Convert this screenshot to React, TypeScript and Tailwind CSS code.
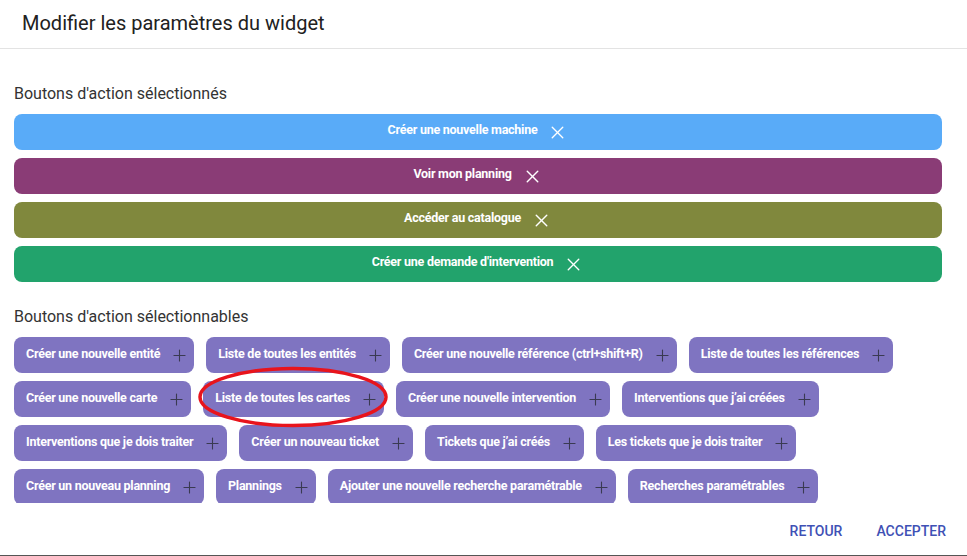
import React from 'react';
import { X, Plus } from 'lucide-react';

const SELECTED = [
  { label: 'Créer une nouvelle machine', color: 'bg-[#59abf8]' },
  { label: 'Voir mon planning', color: 'bg-[#8a3c76]' },
  { label: 'Accéder au catalogue', color: 'bg-[#80883d]' },
  { label: "Créer une demande d'intervention", color: 'bg-[#22a36c]' },
];

const AVAILABLE = [
  'Créer une nouvelle entité',
  'Liste de toutes les entités',
  'Créer une nouvelle référence (ctrl+shift+R)',
  'Liste de toutes les références',
  'Créer une nouvelle carte',
  'Liste de toutes les cartes',
  'Créer une nouvelle intervention',
  'Interventions que j’ai créées',
  'Interventions que je dois traiter',
  'Créer un nouveau ticket',
  'Tickets que j’ai créés',
  'Les tickets que je dois traiter',
  'Créer un nouveau planning',
  'Plannings',
  'Ajouter une nouvelle recherche paramétrable',
  'Recherches paramétrables',
];

const App: React.FC = () => {
  return (
    <div className="relative w-[967px] h-[556px] bg-white flex flex-col border-b border-[#555] font-['Roboto',sans-serif] overflow-hidden">
      {/* Header */}
      <div className="h-[49px] shrink-0 border-b border-[#e3e3e3] flex items-center px-[22px]">
        <h1 className="text-[20px] text-[#212121] leading-none -mt-[2px]">Modifier les paramètres du widget</h1>
      </div>

      {/* Content */}
      <div className="h-[454px] shrink-0 overflow-hidden px-[14px] pt-[35px]">
        <p className="text-[16px] text-[#333] leading-5 mb-[10px]">Boutons d'action sélectionnés</p>
        <div className="flex flex-col gap-2 w-[928px]">
          {SELECTED.map((s) => (
            <div key={s.label} className={`${s.color} h-9 rounded-lg flex items-center justify-center gap-[10px] text-white`}>
              <span className="text-[12.5px] font-bold tracking-[-0.25px] -mt-[3px]">{s.label}</span>
              <X size={21} strokeWidth={1.6} />
            </div>
          ))}
        </div>

        <p className="text-[16px] text-[#333] leading-5 mt-[25px] mb-[10px]">Boutons d'action sélectionnables</p>
        <div className="flex flex-wrap gap-x-3 gap-y-2 w-[900px]">
          {AVAILABLE.map((a) => (
            <div key={a} className="h-9 rounded-lg bg-[#7f74c1] flex items-center pl-3 pr-[5px] gap-[10px]">
              <span className="text-[12.5px] font-bold text-white tracking-[-0.25px] -mt-[2px]">{a}</span>
              <Plus size={19} strokeWidth={1.4} className="text-[#3a3a52]" />
            </div>
          ))}
        </div>
      </div>

      {/* Footer */}
      <div className="flex-1 flex items-center justify-end gap-[34px] pr-[21px] pt-[5px]">
        <button className="text-[14px] font-medium text-[#3f51b5]">RETOUR</button>
        <button className="text-[14px] font-medium text-[#3f51b5]">ACCEPTER</button>
      </div>

      {/* Annotation */}
      <svg className="absolute left-[196px] top-[366px] pointer-events-none" width="194" height="64" viewBox="0 0 194 64">
        <ellipse cx="97" cy="31" rx="93" ry="28.5" fill="none" stroke="#e8141c" strokeWidth="3.5" />
      </svg>
    </div>
  );
};

export default App;
